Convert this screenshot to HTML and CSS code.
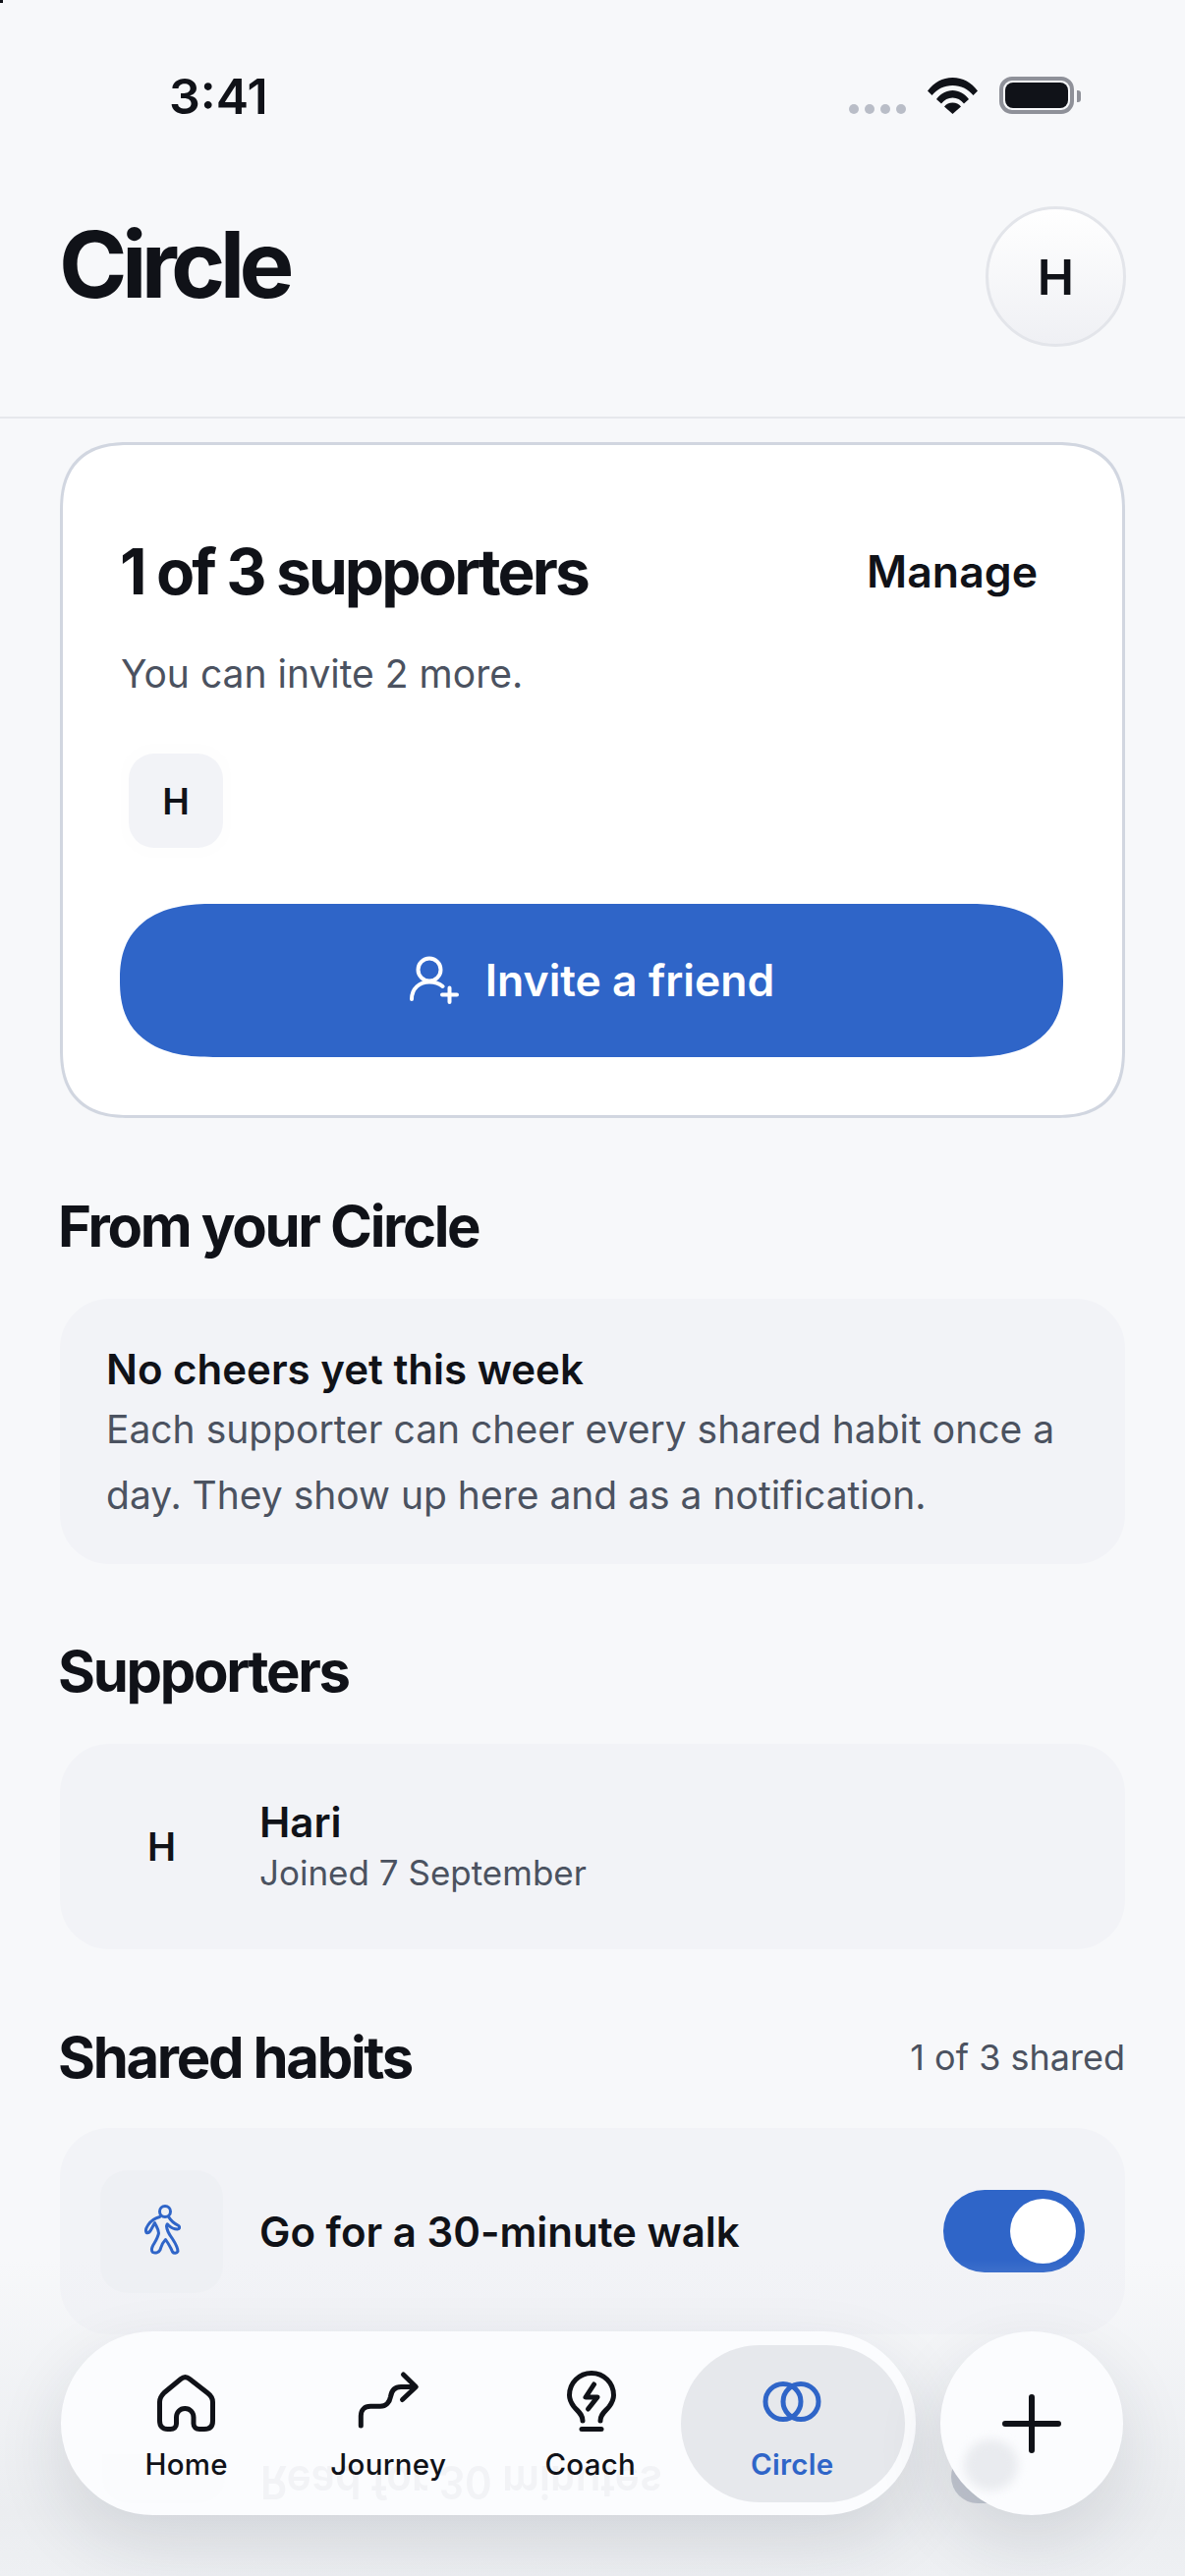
FILE: index.html
```html
<!DOCTYPE html>
<html lang="en">
<head>
<meta charset="utf-8">
<title>Circle</title>
<link rel="stylesheet" href="styles.css">
</head>
<body>
<div class="phone">
  <div class="corner-mark"></div>
  <div class="status">
    <span class="time">3:41</span>
    <div class="status-icons">
      <div class="dots"><i></i><i></i><i></i><i></i></div>
      <svg class="wifi" viewBox="0 0 51 37"><path fill="#101218" d="M0 13.5C6.5 5 15 0 25.5 0S44.5 5 51 13.5L46.5 18C41 11.5 34 8 25.500 8S10 11.5 4.5 18Z"/><path fill="#101218" d="M9 22C13 16.500 19 13 25.5 13S38 16.5 42 22L37 26.5C34 22.500 30 20.500 25.5 20.5S17 22.5 14 26.5Z"/><path fill="#101218" d="M17 29.5C19 27 22 25.5 25.5 25.5S32 27 34 29.500L25.5 37Z"/></svg>
      <div class="battery"><div class="battery-fill"></div></div>
      <div class="battery-nib"></div>
    </div>
  </div>

  <header class="header">
    <h1 class="title">Circle</h1>
    <div class="avatar">H</div>
  </header>

  <main class="main">
    <section class="card">
      <div class="card-top">
        <h2 class="card-title">1 of 3 supporters</h2>
        <span class="manage">Manage</span>
      </div>
      <p class="card-sub">You can invite 2 more.</p>
      <div class="chip-ring"><div class="chip">H</div></div>
      <button class="invite">
        <svg class="invite-icon" viewBox="0 0 52 50" fill="none" stroke="#fff" stroke-width="4" stroke-linecap="round"><circle cx="21" cy="14" r="11.5"/><path d="M3 44C3 33 11 26.5 21 26.5C26 26.5 31 28 34.5 31"/><path d="M34 39.5H49M41.5 32.5V47"/></svg>
        <span>Invite a friend</span>
      </button>
    </section>

    <h2 class="section-title">From your Circle</h2>
    <div class="panel cheers">
      <div class="cheers-title">No cheers yet this week</div>
      <p class="cheers-body">Each supporter can cheer every shared habit once a day. They show up here and as a notification.</p>
    </div>

    <h2 class="section-title next">Supporters</h2>
    <div class="panel supporter">
      <div class="supporter-initial">H</div>
      <div class="supporter-text">
        <div class="supporter-name">Hari</div>
        <div class="supporter-date">Joined 7 September</div>
      </div>
    </div>

    <div class="section-row">
      <h2 class="section-title flush">Shared habits</h2>
      <span class="shared-count">1 of 3 shared</span>
    </div>
    <div class="panel habit">
      <div class="habit-tile">
        <svg class="walker" viewBox="0 0 38 54" fill="none" stroke="#2f65c8" stroke-width="3" stroke-linejoin="round" stroke-linecap="round"><circle cx="22" cy="7" r="5.5"/><path d="M16.5 12.5C11 14 7 17 4.5 21C2.5 24 1.5 26 3 28.5C5.5 29.5 7 27 8 25L11.5 18.5C13 22 15.5 25 15.5 29C15 33 13 36 9.5 42C8.5 44 8 47 9.5 48.5C12 49.8 15.5 49 17 46C18.5 41 20 38 22.5 35.5C25 39 27.5 43 29.5 48C31 50 34 49.5 35 47.5C35 44 33 40 29 34C26 30 24 27.5 23.5 22C24 19.5 24 19 25.5 21C28.5 24 31.5 25 34.5 25C37.5 24.5 37 22 35 21C31 19 28 16.5 26 13"/></svg>
      </div>
      <div class="habit-name">Go for a 30-minute walk</div>
      <div class="toggle"><div class="knob"></div></div>
    </div>
  </main>

  <div class="fade"></div>

  <div class="dock">
    <nav class="nav">
      <div class="ghost-tile"></div>
      <div class="ghost-text">Read for 30 minutes</div>
      <div class="tab">
        <svg class="tab-icon" viewBox="0 0 80 80" fill="none" stroke="#101218" stroke-width="5" stroke-linejoin="round" stroke-linecap="round"><path d="M34 14.5C37 12 40 12 43 14.5L61 28.5C65 31.5 66.5 34 66.5 38V57C66.5 62.5 63.5 65.5 58 65.5H53C49.5 65.5 47 63.5 47 60V53.5C47 48.5 43.5 44.5 38.25 44.5S29.5 48.5 29.5 53.5V60C29.5 63.5 27 65.5 23.5 65.5H20.5C15.5 65.5 12.5 62.5 12.5 57V38C12.5 34 14 31.5 17 28.5Z"/></svg>
        <span class="tab-label">Home</span>
      </div>
      <div class="tab">
        <svg class="tab-icon" viewBox="0 0 80 80" fill="none" stroke="#101218" stroke-width="5" stroke-linejoin="round" stroke-linecap="round"><path d="M12.3 62V52C12.3 46 16 42.3 22 42.3H32C38 42.3 41.5 38 42.5 32.5C43.5 26 47 22.5 53 22.5H68M55.5 10L68.3 22.5L54.5 35.5"/></svg>
        <span class="tab-label">Journey</span>
      </div>
      <div class="tab">
        <svg class="tab-icon" viewBox="0 0 80 80" fill="none" stroke="#101218" stroke-width="5" stroke-linejoin="round" stroke-linecap="round"><path d="M32 57C32 50 27 47.5 23 42.5C20 38.5 18.5 35 18.5 31C18.5 18.5 28.5 8.5 41 8.5S63.5 18.5 63.5 31C63.5 35 62 38.5 59 42.5C55 47.5 50 50 50 57"/><path d="M43.5 20L35 33H47L37.5 45"/><path d="M31 65.5H51"/></svg>
        <span class="tab-label">Coach</span>
      </div>
      <div class="tab active">
        <svg class="tab-icon" viewBox="0 0 80 80" fill="none" stroke="#2f65c8" stroke-width="5"><circle cx="31" cy="37.5" r="18"/><circle cx="49" cy="37.5" r="18"/></svg>
        <span class="tab-label">Circle</span>
      </div>
    </nav>
    <div class="ghost-toggle"></div>
    <div class="plus">
      <div class="ghost-blob"></div>
      <svg class="plus-icon" viewBox="0 0 60 60" fill="none" stroke="#101218" stroke-width="6" stroke-linecap="round"><path d="M30 3V57M3 30H57"/></svg>
    </div>
  </div>
</div>
</body>
</html>
```
FILE: styles.css
```css
* { box-sizing: border-box; }
html, body { margin: 0; padding: 0; }
body { background: #f7f8fa; font-family: Inter, "Liberation Sans", sans-serif; color: #101218; }
h1, h2, p { margin: 0; }

.phone { position: relative; width: 1206px; height: 2622px; overflow: hidden; background: #f7f8fa; }
.corner-mark { position: absolute; left: 0; top: 0; width: 3px; height: 3px; background: #101218; }

.status { display: flex; justify-content: space-between; height: 210px; padding: 69px 0 0 172px; }
.time { font-size: 50px; font-weight: 600; line-height: 58px; }
.status-icons { display: flex; align-items: flex-start; padding: 9px 106px 0 0; }
.dots { display: flex; gap: 6px; margin-top: 28px; margin-right: 22px; }
.dots i { display: block; width: 10px; height: 10px; border-radius: 50%; background: #b9bdc7; }
.wifi { width: 51px; height: 37px; margin-top: 1px; margin-right: 22px; }
.battery { width: 76px; height: 38px; border: 4px solid #8f9199; border-radius: 13px; padding: 2px; }
.battery-fill { width: 100%; height: 100%; background: #101218; border-radius: 8px; }
.battery-nib { width: 4px; height: 12px; margin: 14px 0 0 3px; background: #8f9199; border-radius: 0 3px 3px 0; }

.header { display: flex; justify-content: space-between; align-items: flex-start; padding: 0 60px 71px 60px; border-bottom: 2px solid #e6e8ec; height: 216px; }
.title { font-size: 94px; font-weight: 700; line-height: 118px; letter-spacing: -0.06em; }
.avatar { width: 143px; height: 143px; border-radius: 50%; border: 3px solid #e3e5ea; background: linear-gradient(#ffffff, #eff0f4); display: flex; align-items: center; justify-content: center; font-size: 50px; font-weight: 600; }

.main { padding: 24px 61px 0; }

.card { height: 688px; background: #fff; border: 3px solid #d1d6e0; border-radius: 70px; corner-shape: superellipse(1.3); padding: 0 58px; }
.card-top { display: flex; justify-content: space-between; align-items: center; height: 172px; padding: 86px 28px 0 0; }
.card-title { font-size: 64px; font-weight: 700; letter-spacing: -0.045em; line-height: 80px; }
.manage { font-size: 44.600px; font-weight: 600; }
.card-sub { font-size: 39px; line-height: 56px; color: #4b5260; margin-top: 33px; margin-left: 1px; }
.chip-ring { width: 112px; height: 116px; padding: 10px 8px; margin: 43px 0 0 1px; border-radius: 34px; background: #fefefe; }
.chip { width: 96px; height: 96px; border-radius: 26px; background: #f2f3f7; display: flex; align-items: center; justify-content: center; font-size: 37px; font-weight: 600; }
.invite { display: flex; align-items: center; justify-content: center; gap: 26px; width: 960px; height: 156px; margin-top: 47px; border: 0; border-radius: 95px / 78px; corner-shape: superellipse(1.3); background: #2f65c8; color: #fff; font-family: Inter, "Liberation Sans", sans-serif; font-size: 44.500px; font-weight: 600; padding: 0; }
.invite-icon { width: 52px; height: 50px; }

.section-title { font-size: 58px; font-weight: 700; letter-spacing: -0.04em; line-height: 72px; margin: 74px 0 38px -2px; }
.section-title.next { margin-top: 73px; }
.section-title.flush { margin: 0; }
.section-row { display: flex; justify-content: space-between; align-items: center; margin: 74px 0 36px -2px; }
.shared-count { font-size: 36px; color: #4b5260; }

.panel { background: #f2f3f7; border-radius: 50px; }
.cheers { height: 270px; padding: 46px 30px 0 47px; }
.cheers-title { font-size: 42px; font-weight: 600; line-height: 52px; }
.cheers-body { font-size: 39px; line-height: 67px; color: #4b5260; margin-top: 1px; }

.supporter { display: flex; align-items: center; height: 209px; }
.supporter-initial { width: 203px; padding-left: 4px; text-align: center; font-size: 39px; font-weight: 600; }
.supporter-text { padding-top: 1px; }
.supporter-name { font-size: 42px; font-weight: 600; line-height: 52px; }
.supporter-date { font-size: 35px; line-height: 50px; color: #4b5260; }

.habit { display: flex; align-items: center; height: 210px; padding: 0 41px; margin-bottom: 40px; }
.habit-tile { width: 125px; height: 125px; border-radius: 28px; background: #eef0f4; display: flex; align-items: center; justify-content: center; flex: none; }
.walker { width: 38px; height: 54px; }
.habit-name { flex: 1; margin-left: 37px; font-size: 42px; font-weight: 600; }
.toggle { width: 144px; height: 84px; border-radius: 42px; background: #2f65c8; padding: 9px; display: flex; justify-content: flex-end; }
.knob { width: 67px; height: 66px; border-radius: 50%; background: #fff; }

.fade { position: absolute; left: 0; right: 0; top: 2300px; bottom: 0; background: linear-gradient(rgba(247,248,250,0), rgba(238,240,243,0.8) 45%, #ebedf0 80%, #eef0f3); }

.dock { position: absolute; left: 62px; top: 2373px; width: 1081px; height: 187px; }
.nav { position: relative; display: grid; grid-template-columns: repeat(4, 205.500px); width: 870px; height: 187px; padding-left: 25px; border-radius: 94px; background: #fbfcfe; box-shadow: 0 28px 70px rgba(30,40,60,0.12); }
.tab { position: relative; display: flex; flex-direction: column; align-items: center; }
.tab.active::before { content: ""; position: absolute; left: -11px; right: -12px; top: 14px; height: 160px; border-radius: 80px; background: #e6e8ec; }
.tab-icon { position: relative; width: 80px; height: 80px; margin-top: 34px; }
.tab-label { position: relative; font-size: 29.500px; font-weight: 500; line-height: 36px; margin-top: 3px; letter-spacing: 0.01em; }
.active .tab-label { color: #2f65c8; font-weight: 600; }

.ghost-text { position: absolute; left: 203px; top: 127px; font-size: 42px; font-weight: 600; line-height: 52px; color: #f2f3f6; transform: scaleY(-1.1); filter: blur(0.6px); white-space: nowrap; }
.ghost-tile { position: absolute; left: 42px; top: 125px; width: 125px; height: 50px; border-radius: 0 0 28px 28px; background: #fafbfd; }

.ghost-toggle { position: absolute; left: 906px; top: 121px; width: 74px; height: 54px; border-radius: 37px; background: #c2c7d1; }
.plus { position: absolute; left: 895px; top: 0; width: 186px; height: 187px; border-radius: 50%; background: #fbfcfe; box-shadow: 0 28px 70px rgba(30,40,60,0.12); display: flex; align-items: center; justify-content: center; overflow: hidden; }
.ghost-blob { position: absolute; left: 24px; top: 110px; width: 55px; height: 52px; border-radius: 50%; background: #e9ebef; filter: blur(5px); }
.plus-icon { position: relative; width: 60px; height: 60px; }
```
